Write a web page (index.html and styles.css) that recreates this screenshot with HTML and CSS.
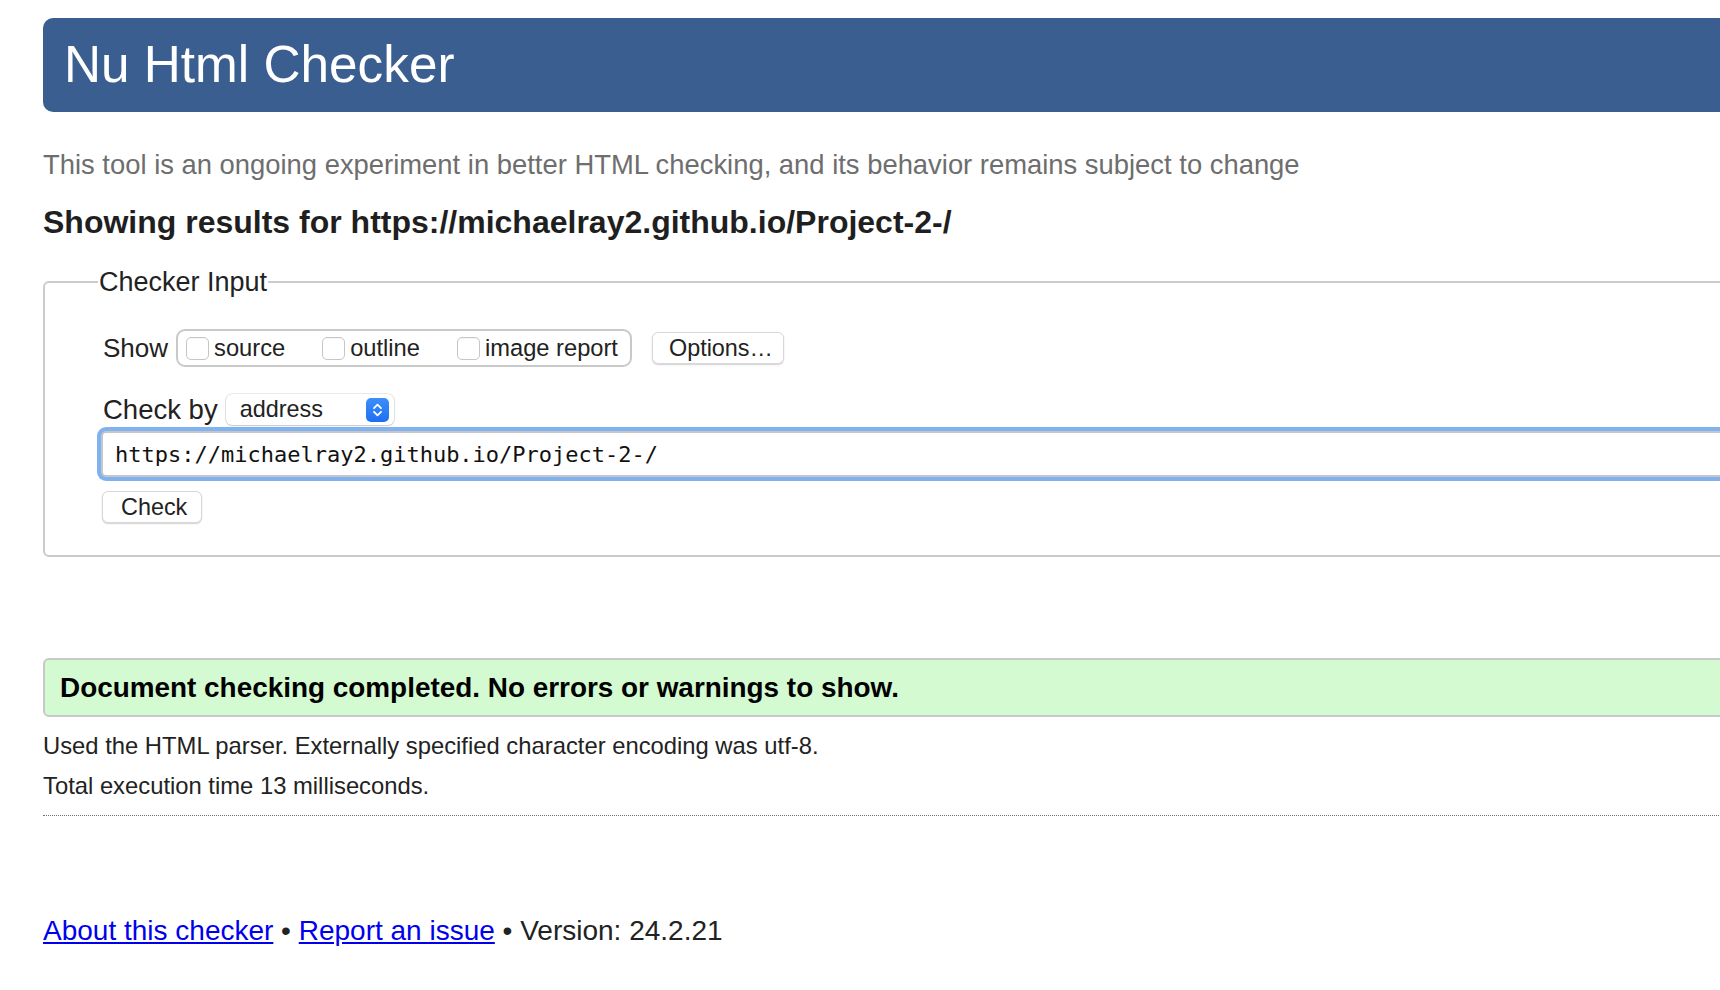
FILE: index.html
```html
<!DOCTYPE html>
<html lang="en">
<head>
<meta charset="utf-8">
<title>Nu Html Checker</title>
<link rel="stylesheet" href="styles.css">
</head>
<body>
<div class="page">
  <h1 class="banner">Nu Html Checker</h1>
  <p class="tagline">This tool is an ongoing experiment in better HTML checking, and its behavior remains subject to change</p>
  <h2 class="results-for">Showing results for https://michaelray2.github.io/Project-2-/</h2>
  <form class="checker">
    <fieldset class="input-set">
      <legend>Checker Input</legend>
      <div class="row show-row">
        <span class="row-label">Show</span>
        <span class="opt-group">
          <label class="opt"><input type="checkbox" class="cb">source</label>
          <label class="opt"><input type="checkbox" class="cb">outline</label>
          <label class="opt"><input type="checkbox" class="cb">image report</label>
        </span>
        <button type="button" class="btn options">Options…</button>
      </div>
      <div class="row by-row">
        <span class="row-label by-label">Check by</span>
        <span class="select">address
          <svg class="stepper" width="23" height="24" viewBox="0 0 23 24">
            <defs>
              <linearGradient id="stepg" x1="0" y1="0" x2="0" y2="1">
                <stop offset="0" stop-color="#3d8ff9"/>
                <stop offset="1" stop-color="#1d6ff3"/>
              </linearGradient>
            </defs>
            <rect x="0" y="0" width="23" height="24" rx="5" fill="url(#stepg)"/>
            <path d="M8 10.2 L11.5 6.7 L15 10.2" fill="none" stroke="#fff" stroke-width="1.8" stroke-linecap="round" stroke-linejoin="round"/>
            <path d="M8 13.8 L11.5 17.3 L15 13.8" fill="none" stroke="#fff" stroke-width="1.8" stroke-linecap="round" stroke-linejoin="round"/>
          </svg>
        </span>
      </div>
      <input class="url" type="text" value="https://michaelray2.github.io/Project-2-/">
      <button type="button" class="btn check">Check</button>
    </fieldset>
  </form>
  <div class="success">Document checking completed. No errors or warnings to show.</div>
  <p class="details">Used the HTML parser. Externally specified character encoding was utf-8.</p>
  <p class="details">Total execution time 13 milliseconds.</p>
  <hr class="dots">
  <p class="footer"><a href="#">About this checker</a> • <a href="#">Report an issue</a> • Version: 24.2.21</p>
</div>
</body>
</html>
```
FILE: styles.css
```css
html, body {
  margin: 0;
  background: #fff;
}
body {
  overflow: hidden;
  font-family: "Liberation Sans", Arial, Helvetica, sans-serif;
  color: #222;
}
.page {
  width: 1760px;
  padding: 18px 0 0 43px;
}
.banner {
  margin: 0;
  height: 94px;
  line-height: 94px;
  padding-left: 21px;
  background: #3a5e8f;
  color: #fff;
  font-size: 51.3px;
  font-weight: normal;
  border-radius: 10px;
}
.tagline {
  margin: 37px 0 0;
  font-size: 27.4px;
  line-height: 32px;
  color: #6e6e6e;
}
.results-for {
  margin: 23px 0 0;
  font-size: 32px;
  line-height: 36px;
  font-weight: bold;
  color: #1f1f1f;
}
.checker {
  margin: 0;
}
.input-set {
  margin: 26px 0 0;
  padding: 31px 0 32px 56px;
  border: 2px solid #cbcbcb;
  border-radius: 6px;
  min-width: 0;
}
.input-set legend {
  font-size: 27px;
  line-height: 32px;
  padding: 0 1px;
  margin-left: -3px;
  color: #222;
}
.row {
  display: flex;
  align-items: center;
}
.show-row {
  height: 38px;
}
.row-label {
  font-size: 26px;
  margin-left: 2px;
  margin-right: 8px;
  color: #222;
}
.by-label {
  font-size: 27.5px;
  margin-right: 8px;
}
.opt-group {
  display: flex;
  align-items: center;
  gap: 37px;
  height: 38px;
  box-sizing: border-box;
  border: 2px solid #c9c9c9;
  border-radius: 9px;
  padding: 0 12px 0 8px;
}
.opt {
  display: flex;
  align-items: center;
  gap: 5px;
  font-size: 23.7px;
  color: #222;
}
.cb {
  appearance: none;
  -webkit-appearance: none;
  margin: 0;
  width: 23px;
  height: 23px;
  box-sizing: border-box;
  border: 1px solid #c6c6c6;
  border-radius: 5px;
  background: #fff;
  box-shadow: inset 0 1px 1px rgba(0, 0, 0, 0.04);
}
.btn {
  font-family: inherit;
  font-size: 23.4px;
  color: #222;
  background: #fff;
  border: 1px solid #d8d8d8;
  border-radius: 6px;
  box-shadow: 0 1px 1.5px rgba(0, 0, 0, 0.18);
  height: 32px;
  box-sizing: border-box;
  line-height: 30px;
  padding: 0 16px;
}
.options {
  margin-left: 20px;
  width: 132px;
}
.by-row {
  margin-top: 27px;
  height: 31px;
}
.select {
  display: flex;
  align-items: center;
  justify-content: space-between;
  width: 168px;
  height: 31px;
  box-sizing: border-box;
  padding: 0 5px 0 14px;
  background: #fff;
  border-radius: 6px;
  box-shadow: 0 0 0 0.5px rgba(0, 0, 0, 0.16), 0 1px 2px rgba(0, 0, 0, 0.16);
  font-size: 23.4px;
  color: #222;
}
.stepper {
  display: block;
}
.url {
  display: block;
  margin: 6px 0 0;
  width: 100%;
  height: 46px;
  box-sizing: border-box;
  border: 2px solid #c6c6c6;
  border-radius: 5px;
  box-shadow: 0 0 0 4px #80b2f2;
  outline: none;
  padding: 0 12px;
  font-family: "DejaVu Sans Mono", "Liberation Mono", monospace;
  font-size: 22px;
  color: #111;
  background: #fff;
}
.check {
  display: block;
  margin-top: 14px;
  margin-left: 1px;
  width: 100px;
  padding: 0 18px;
  text-align: left;
}
.success {
  margin-top: 101px;
  height: 59px;
  box-sizing: border-box;
  border: 2px solid #c8c8c8;
  border-radius: 6px;
  background: #d4fad1;
  padding-left: 15px;
  font-weight: bold;
  font-size: 27.9px;
  line-height: 55px;
  color: #000;
}
.details {
  margin: 4px 0 0;
  font-size: 23.8px;
  line-height: 36px;
  color: #222;
}
.success + .details {
  margin-top: 11px;
}
.dots {
  margin: 11px 0 0;
  height: 0;
  border: 0;
  border-top: 1px dotted #6f6f6f;
}
.footer {
  margin: 97px 0 0;
  font-size: 28px;
  line-height: 36px;
  color: #222;
}
.footer a {
  color: #0000ee;
}
```
